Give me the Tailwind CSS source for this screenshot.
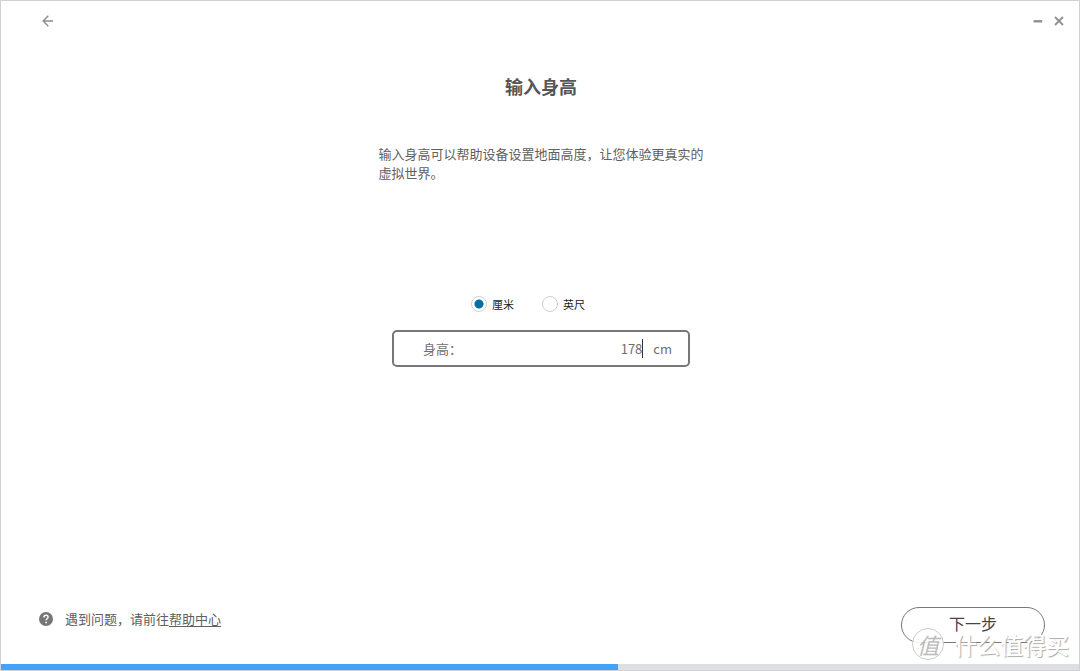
<!DOCTYPE html>
<html lang="zh-CN">
<head>
<meta charset="utf-8">
<meta name="viewport" content="width=device-width, initial-scale=1">
<title>输入身高</title>
<script src="https://cdn.jsdelivr.net/npm/@tailwindcss/browser@4"></script>
</head>
<body class="relative flex min-h-screen flex-col border border-[#d2d2d2] bg-white font-['Noto_Sans_CJK_SC',sans-serif] text-[13px] text-[#606060]">
  <header class="flex h-[39px] items-center justify-between pr-[13px] pl-10">
    <button type="button" aria-label="返回" class="text-[#8c8c8c]">
      <svg class="size-3.5" viewBox="0 0 14 14" fill="none" stroke="currentColor" stroke-width="1.4"><path d="M12 7H2.5M7.3 1.8L2.2 7l5.1 5.2"/></svg>
    </button>
    <div class="flex gap-2 text-[#909090]">
      <button type="button" aria-label="最小化"><svg class="size-3.5" viewBox="0 0 14 14" fill="none" stroke="currentColor" stroke-width="2.4"><path d="M3.6 7.3h8.6"/></svg></button>
      <button type="button" aria-label="关闭"><svg class="size-3.5" viewBox="0 0 14 14" fill="none" stroke="currentColor" stroke-width="1.8"><path d="M3 3l8 8M11 3l-8 8"/></svg></button>
    </div>
  </header>

  <main class="flex flex-1 flex-col items-center pt-8 pl-0.5">
    <h1 class="text-lg leading-7 font-bold text-[#555]">输入身高</h1>
    <p class="mt-11 w-[325px] leading-[19px]">输入身高可以帮助设备设置地面高度，让您体验更真实的虚拟世界。</p>

    <form class="mt-[114px] flex w-[298px] flex-col">
      <div class="flex gap-7 pl-[79px] text-[11px] leading-4 text-[#222]">
        <label class="flex items-center gap-[5px]"><input type="radio" name="unit" checked class="size-4 appearance-none rounded-full border border-[#cfcfcf] bg-white checked:bg-[radial-gradient(circle,#036ea1_4px,#fff_5px)]">厘米</label>
        <label class="flex items-center gap-[5px]"><input type="radio" name="unit" class="size-4 appearance-none rounded-full border border-[#cfcfcf] bg-white">英尺</label>
      </div>
      <div class="mt-[18px] flex h-[37px] items-center rounded-[5px] border-2 border-[#777] pr-4 pl-[29px] text-[#707070]">
        <label for="height">身高：</label>
        <input id="height" type="text" inputmode="numeric" value="178" class="min-w-0 flex-1 text-right outline-none">
        <span class="h-[19px] w-px bg-[#333]"></span>
        <span class="ml-2.5">cm</span>
      </div>
    </form>
  </main>

  <footer class="flex items-start justify-between pr-[34px] pb-[21px] pl-[38px]">
    <div class="flex items-center gap-3 pt-0.5">
      <svg class="size-3.5" viewBox="0 0 14 14" fill="none"><circle cx="7" cy="7" r="7" fill="#777"/><path d="M4.9 5.4c0-1.4.9-2.1 2.1-2.1s2.1.8 2.1 1.9c0 1.5-2 1.6-2 3.1" stroke="#fff" stroke-width="1.4"/><circle cx="7.1" cy="10.4" r=".9" fill="#fff"/></svg>
      <p class="leading-5">遇到问题，请前往<a href="#help" class="underline underline-offset-2">帮助中心</a></p>
    </div>
    <button type="button" class="h-9 w-36 rounded-full border border-[#777] pb-1 text-base leading-6 text-[#444]">下一步</button>
  </footer>

  <div role="progressbar" aria-label="设置进度" aria-valuenow="57" aria-valuemin="0" aria-valuemax="100" class="h-1.5 bg-[#dedfe4]">
    <div class="h-full bg-[#43a3fb]" style="width:57.2%"></div>
  </div>

  <div class="pointer-events-none absolute right-2.5 bottom-2.5 flex items-center gap-2.5 text-white select-none">
    <span class="flex size-8 items-center justify-center rounded-full border border-[#ccc] bg-white/90 text-[22px] leading-6 text-[#bbb] italic">值</span>
    <span class="text-[23px] leading-8 font-medium text-shadow-[1px_1px_1px_#aaa]">什么值得买</span>
  </div>
</body>
</html>
